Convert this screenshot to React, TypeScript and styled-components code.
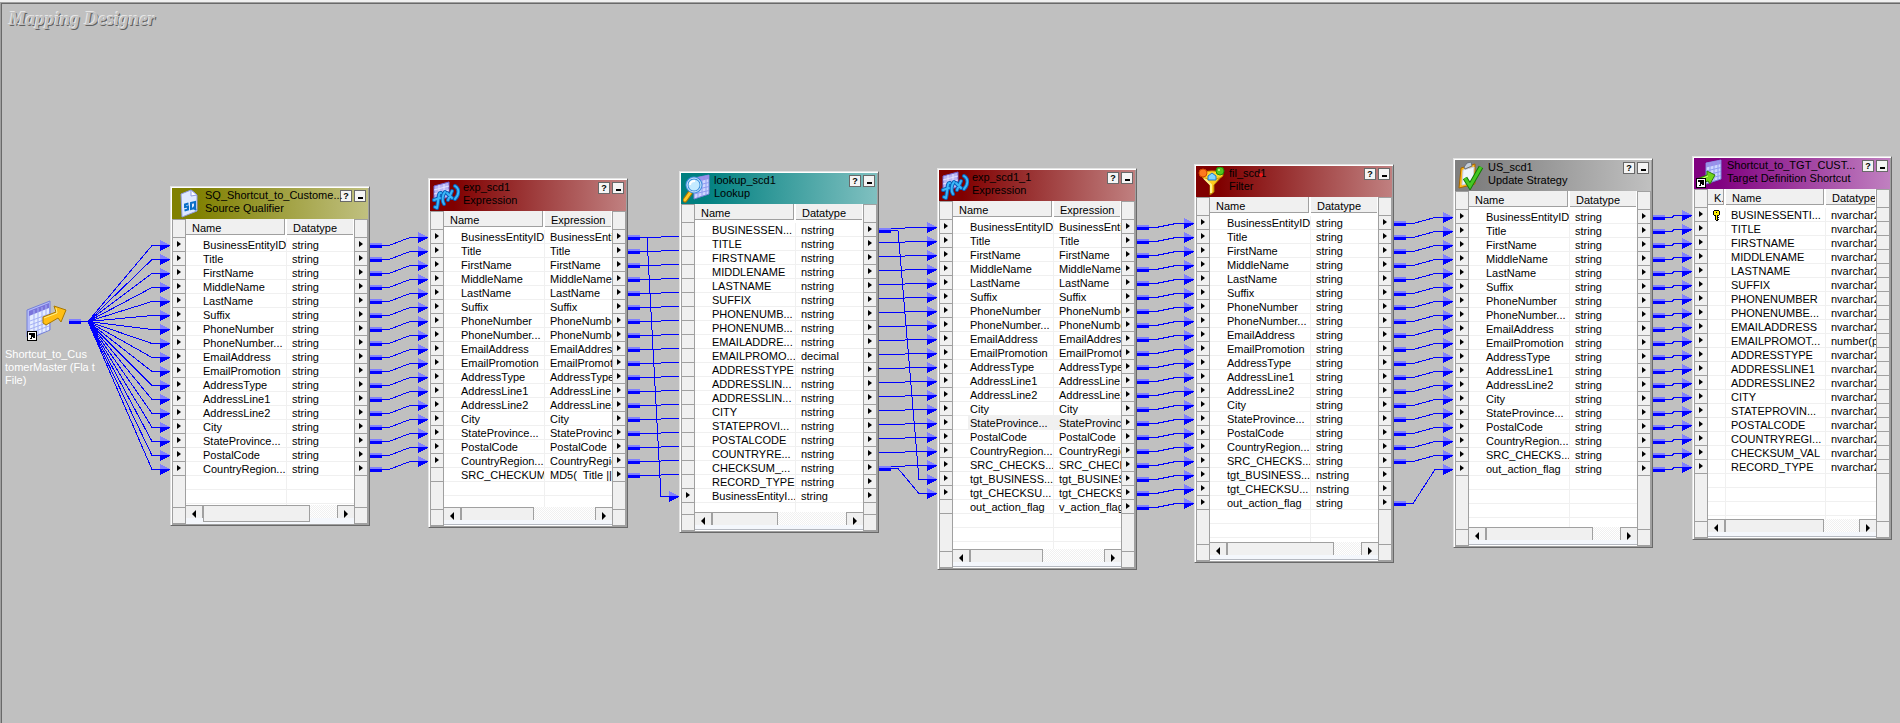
import React from "react";
import styled, { createGlobalStyle, css } from "styled-components";

const GlobalStyle = createGlobalStyle`
  * { box-sizing: border-box; }
  body {
    margin: 0;
    background: #c0c0c0;
    font-family: "Liberation Sans", Arial, sans-serif;
    font-size: 11px;
    line-height: 13px;
    color: #000;
  }
`;

/* ---------- geometry shared by the nodes and the links ---------- */

const ROW = 14;
const NODE_WIDTH = 200;
const FIRST_PORT = 59;

type Theme = { from: string; to: string };

const THEMES: Record<string, Theme> = {
  olive: { from: "#808000", to: "#c0c080" },
  red: { from: "#800000", to: "#c08080" },
  teal: { from: "#008080", to: "#80c0c0" },
  gray: { from: "#808080", to: "#c0c0c0" },
  purple: { from: "#800080", to: "#c080c0" },
};

type Row = {
  name: string;
  value: string;
  input?: boolean;
  output?: boolean;
  active?: boolean;
  primaryKey?: boolean;
};

type NodeData = {
  id: string;
  title: string;
  kind: string;
  theme: Theme;
  icon: React.ReactNode;
  x: number;
  y: number;
  height: number;
  valueLabel: string;
  thumb: number;
  tallThumb?: boolean;
  keyColumn?: boolean;
  flagged?: boolean;
  rows: Row[];
};

/* ---------- styled parts ---------- */

const Canvas = styled.main`
  position: relative;
  min-height: 100vh;
  overflow: hidden;
  background: #c0c0c0;
  box-shadow: inset 0 2px #f0f0f0, inset 1px 3px #a0a0a0, inset 2px 4px #696969;
`;

const CanvasTitle = styled.h1`
  margin: 0;
  padding: 8px 9px;
  font: italic bold 19px/22px "Liberation Serif", "Times New Roman", serif;
  color: #c0c0c0;
  text-shadow: -1px -1px 0 #e6e6e6, 1px 1px 0 #606060;
`;

const Links = styled.svg`
  position: absolute;
  inset: 0;
  width: 100%;
  height: 100%;
  pointer-events: none;
`;

const SourceNode = styled.figure`
  position: absolute;
  left: 5px;
  top: 299px;
  margin: 0;
  width: 88px;
  color: #fff;
`;

const SourceIcon = styled.svg`
  display: block;
  width: 42px;
  height: 42px;
  margin: 0 0 7px 20px;
`;

const SourceLabel = styled.figcaption`
  white-space: pre;
`;

const Window = styled.section<{ $x: number; $y: number; $height: number }>`
  position: absolute;
  left: ${(p) => p.$x}px;
  top: ${(p) => p.$y}px;
  width: ${NODE_WIDTH}px;
  height: ${(p) => p.$height}px;
  display: flex;
  flex-direction: column;
  background: #fff;
  border: 1px solid;
  border-color: #e3e3e3 #696969 #696969 #e3e3e3;
  box-shadow: inset 1px 1px #fff, inset -1px -1px #a0a0a0;
  padding: 1px;
`;

const TitleBar = styled.header<{ $theme: Theme }>`
  flex: none;
  display: flex;
  align-items: flex-start;
  height: 31px;
  padding: 0 2px;
  background: linear-gradient(to right, ${(p) => p.$theme.from} 12%, ${(p) => p.$theme.to});
`;

const TitleIcon = styled.svg`
  flex: none;
  width: 28px;
  height: 29px;
  margin-top: 1px;
`;

const TitleText = styled.div`
  position: relative;
  flex: 1;
  min-width: 0;
  padding: 1px 0 0 3px;
  white-space: nowrap;
`;

const TitleLine = styled.h2`
  margin: 0;
  font: inherit;
`;

const Flag = styled.span`
  position: absolute;
  left: 33px;
  top: 7px;
  width: 4px;
  height: 4px;
  border-radius: 2px;
  background: #f01818;
`;

const TitleButtons = styled.div`
  flex: none;
  display: flex;
  gap: 2px;
  padding-top: 2px;
`;

const TitleButton = styled.button`
  display: grid;
  place-items: center;
  width: 12px;
  height: 12px;
  padding: 0;
  border: 1px solid #696969;
  background: #f4f4f4;
  font: bold 9px/10px "Liberation Sans", Arial, sans-serif;
  color: #000;
`;

const MinimizeMark = styled.span`
  width: 5px;
  height: 2px;
  margin-top: 4px;
  background: #000;
`;

const Body = styled.div`
  flex: 1;
  min-height: 0;
  display: flex;
`;

const Gutter = styled.div`
  flex: none;
  display: flex;
  flex-direction: column;
  width: 14px;
  background: #f0f0f0;
  border: 1px solid #a0a0a0;
  border-width: 1px 1px 0;
`;

const GutterHead = styled.div`
  flex: none;
  height: 18px;
  border-bottom: 1px solid #a0a0a0;
`;

const PortCell = styled.div`
  flex: none;
  display: flex;
  align-items: center;
  justify-content: center;
  height: ${ROW}px;
  padding-bottom: 1px;
  border-bottom: 1px solid #a0a0a0;
`;

const PortMark = styled.span`
  border: solid transparent;
  border-width: 3px 0 3px 4px;
  border-left-color: #000;
`;

const GutterRest = styled.div`
  flex: 1;
`;

const GutterFoot = styled.div`
  flex: none;
  height: 17px;
  border: solid #a0a0a0;
  border-width: 1px 0;
`;

const Middle = styled.div`
  flex: 1;
  min-width: 0;
  display: flex;
  flex-direction: column;
`;

const Grid = styled.div`
  flex: 1;
  min-height: 0;
  overflow: hidden;
`;

const Table = styled.table`
  width: 100%;
  table-layout: fixed;
  border-collapse: separate;
  border-spacing: 0;
`;

const KeyCol = styled.col`
  width: 18px;
`;

const NameCol = styled.col<{ $wide: boolean }>`
  width: ${(p) => (p.$wide ? 101 : 100)}px;
`;

const HeadCell = styled.th`
  height: 19px;
  padding: 0 1px 3px 0;
  font-weight: normal;
  text-align: left;
  vertical-align: top;
`;

const HeadLabel = styled.div<{ $last?: boolean }>`
  height: 16px;
  padding: 3px 0 0 6px;
  line-height: 12px;
  overflow: hidden;
  white-space: nowrap;
  background: #f0f0f0;
  border-bottom: 1px solid #a0a0a0;
  ${(p) =>
    !p.$last &&
    css`
      margin-right: 1px;
      border-right: 1px solid #a0a0a0;
    `}
`;

const Cell = styled.td<{ $indent: number; $last?: boolean; $active?: boolean }>`
  height: ${ROW}px;
  padding: 2px 0 0 ${(p) => p.$indent}px;
  line-height: 11px;
  white-space: pre;
  overflow: hidden;
  border-bottom: 1px solid #f0f0f0;
  ${(p) => !p.$last && "border-right: 1px solid #f0f0f0;"}
  ${(p) =>
    p.$active &&
    (p.$last
      ? "background: #f0f0f0;"
      : "background: linear-gradient(to right, #fff 15px, #f0f0f0 15px);")}
`;

const KeyIcon = styled.svg`
  display: block;
  width: 7px;
  height: 11px;
`;

const ScrollArea = styled.div<{ $line: boolean }>`
  flex: none;
  height: 19px;
  background: #f4f7fc;
  ${(p) => p.$line && "box-shadow: inset 0 -1px #fff, inset 0 -2px #b4b8c0;"}
`;

const ScrollBar = styled.div`
  display: flex;
  height: 13px;
  background: repeating-conic-gradient(#f0f0f0 0 25%, #fff 0 50%) 0 0 / 2px 2px;
`;

const ScrollButton = styled.button<{ $side: "left" | "right" }>`
  display: grid;
  place-items: center;
  width: 17px;
  height: 13px;
  padding: 3px 0 0;
  border: 0 solid #a0a0a0;
  border-top-width: 1px;
  background: #f0f0f0;
  ${(p) =>
    p.$side === "left"
      ? "border-right-width: 1px;"
      : "border-left-width: 1px; margin-left: auto;"}
`;

const ScrollMark = styled.span<{ $side: "left" | "right" }>`
  border: solid transparent;
  border-width: ${(p) => (p.$side === "left" ? "4px 4px 4px 0" : "4px 0 4px 4px")};
  border-${(p) => (p.$side === "left" ? "right" : "left")}-color: #000;
`;

const Thumb = styled.div<{ $width: number; $tall?: boolean }>`
  width: ${(p) => p.$width}px;
  height: ${(p) => (p.$tall ? 17 : 13)}px;
  background: #f0f0f0;
  border: 1px solid #a0a0a0;
  ${(p) => !p.$tall && "border-bottom: 0;"}
`;

/* ---------- icons ---------- */

const SheetShape = () => (
  <g>
    <path d="M9 3 L24 0 V19 L9 24 Z" fill="#cdd6ff" stroke="#7880d8" strokeWidth="1" />
    <path d="M9 3 L24 0 V4 L9 7.500 Z" fill="#9a8ee8" />
    <path
      d="M13 3 V22 M17 2 V21 M21 1 V20 M9 11 L24 7.500 M9 15 L24 11.500 M9 19 L24 15.500"
      stroke="#8f9cf0"
      strokeWidth="1"
      fill="none"
    />
  </g>
);

const ShortcutBadge = ({ x, y }: { x: number; y: number }) => (
  <g transform={`translate(${x} ${y})`} shapeRendering="crispEdges">
    <rect x="0.5" y="0.5" width="9" height="9" fill="#fff" stroke="#000" />
    <path d="M2 2 H8 V7 H6 V6 H5 V8 H3 V7 H4 V4 H2 Z" fill="#000" />
  </g>
);

const SqIcon = (
  <TitleIcon viewBox="0 0 28 29" aria-hidden="true">
    <path d="M7 5 L17 1 L23 6 V22 L8 28 Z" fill="#dfe9ff" stroke="#8f9be0" />
    <path d="M17 1 V7 L23 6 Z" fill="#fff" stroke="#8f9be0" />
    <g fill="none" stroke="#0a6fc8" strokeWidth="2">
      <path d="M14.500 14.500 L11 15.500 V18 L14 17.500 V20.500 L10.500 21.500" />
      <path d="M17 14 L21 13 V19 L17 20 Z M19 18 L22 21" />
    </g>
  </TitleIcon>
);

const FxIcon = (
  <TitleIcon viewBox="0 0 28 29" aria-hidden="true">
    <path d="M2 5 L17 1 V16 L2 20 Z" fill="#b7b4f4" stroke="#6f62d0" />
    <path d="M2 9 L17 5 M2 13 L17 9 M7 4 V19 M12 3 V17" stroke="#e4e4ff" fill="none" />
    <g fill="none" strokeLinecap="round" strokeLinejoin="round">
      <g stroke="#0a5fb8" strokeWidth="4">
        <path d="M9 12 C6 11 7 18 5 27 L3 26 M2 19 L8 17" />
        <path d="M13 11 C10 14 10 20 12 23 M23 5 C28 8 27 14 23 18 M15 12 L20 17 M20 10 L16 19" />
      </g>
      <g stroke="#3cb8f8" strokeWidth="2">
        <path d="M9 12 C6 11 7 18 5 27 L3 26 M2 19 L8 17" />
        <path d="M13 11 C10 14 10 20 12 23 M23 5 C28 8 27 14 23 18 M15 12 L20 17 M20 10 L16 19" />
      </g>
    </g>
  </TitleIcon>
);

const LookupIcon = (
  <TitleIcon viewBox="0 0 28 29" aria-hidden="true">
    <g transform="translate(2 1)">
      <SheetShape />
    </g>
    <path d="M7 19 L2 26" stroke="#a87400" strokeWidth="5" strokeLinecap="round" />
    <path d="M7 19 L2 26" stroke="#ffc928" strokeWidth="3" strokeLinecap="round" />
    <circle cx="11" cy="11" r="7" fill="#c4eaff" stroke="#3e8fdc" strokeWidth="3" />
    <circle cx="11" cy="11" r="7" fill="none" stroke="#d8ecff" strokeWidth="1" />
    <path d="M7 11 C7 8 9 7 12 7" stroke="#fff" strokeWidth="2" fill="none" />
  </TitleIcon>
);

const FilterIcon = (
  <TitleIcon viewBox="0 0 28 29" aria-hidden="true">
    <path d="M2 8 H25 L16 18 V25 L12 28 V18 Z" fill="#ffcb1e" stroke="#a86c00" />
    <path d="M6 11 L13 18 V26" stroke="#fff08a" strokeWidth="2" fill="none" />
    <ellipse cx="14" cy="8" rx="11" ry="4" fill="#ffd428" stroke="#d89600" />
    <path d="M10 9 L14 6 L18 9 V13 H10 Z" fill="#7fd4ff" stroke="#1f78c8" />
    <circle cx="5" cy="6" r="4" fill="#ff7a1e" stroke="#d04800" />
    <circle cx="22" cy="4" r="4" fill="#52c41e" stroke="#1e8a08" />
    <circle cx="21" cy="3" r="1" fill="#c6ff9a" />
  </TitleIcon>
);

const StrategyIcon = (
  <TitleIcon viewBox="0 0 28 29" aria-hidden="true">
    <path d="M4 7 L18 3 V23 L2 27 Z" fill="#ffb81e" stroke="#a86800" />
    <path d="M6 9 L17 6 L16 21 L5 24 Z" fill="#f0f6ff" stroke="#c8d0e0" />
    <path d="M7 6 L10 2 L14 1 L15 5 L8 8 Z" fill="#c4ccd8" stroke="#68707c" />
    <path d="M8 17 L13 25 L24 6" fill="none" stroke="#147a08" strokeWidth="5" />
    <path d="M8 17 L13 25 L24 6" fill="none" stroke="#45c824" strokeWidth="3" />
  </TitleIcon>
);

const TargetIcon = (
  <TitleIcon viewBox="0 0 28 29" aria-hidden="true">
    <g transform="translate(1 1)">
      <SheetShape />
    </g>
    <path d="M1 20 L11 16 V12 L19 16 L14 25 L12 22 L3 25 Z" fill="#6fd41a" stroke="#2c7a08" />
    <path d="M3 21 L12 17" stroke="#d4ff7a" fill="none" />
    <ShortcutBadge x={0} y={19} />
  </TitleIcon>
);

/* ---------- data ---------- */

const FIELDS = [
  "BusinessEntityID",
  "Title",
  "FirstName",
  "MiddleName",
  "LastName",
  "Suffix",
  "PhoneNumber",
  "PhoneNumber...",
  "EmailAddress",
  "EmailPromotion",
  "AddressType",
  "AddressLine1",
  "AddressLine2",
  "City",
  "StateProvince...",
  "PostalCode",
  "CountryRegion...",
];

const EXPRESSIONS = [
  "BusinessEntit",
  "Title",
  "FirstName",
  "MiddleName",
  "LastName",
  "Suffix",
  "PhoneNumbe",
  "PhoneNumbe",
  "EmailAddress",
  "EmailPromotio",
  "AddressType",
  "AddressLine1",
  "AddressLine2",
  "City",
  "StateProvince",
  "PostalCode",
  "CountryRegio",
];

const through = (name: string, value: string): Row => ({ name, value, input: true, output: true });
const stringRows = (names: string[]) => names.map((n) => through(n, "string"));
const lookupRow = (name: string): Row => ({
  name,
  value: name.startsWith("EMAILPROMO") ? "decimal" : "nstring",
  output: true,
});
const targetRow = (name: string, i: number): Row => ({
  name,
  value: name.startsWith("EMAILPROMO") ? "number(p" : "nvarchar2",
  input: true,
  primaryKey: i === 0,
});
const passRows = FIELDS.map((n, i) => through(n, EXPRESSIONS[i]));

const NODES: NodeData[] = [
  {
    id: "sq",
    title: "SQ_Shortcut_to_Custome...",
    kind: "Source Qualifier",
    theme: THEMES.olive,
    icon: SqIcon,
    x: 170,
    y: 186,
    height: 340,
    valueLabel: "Datatype",
    thumb: 107,
    tallThumb: true,
    rows: stringRows(FIELDS),
  },
  {
    id: "exp",
    title: "exp_scd1",
    kind: "Expression",
    theme: THEMES.red,
    icon: FxIcon,
    x: 428,
    y: 178,
    height: 350,
    valueLabel: "Expression",
    thumb: 73,
    rows: [...passRows, { name: "SRC_CHECKUM", value: "MD5(  Title ||", output: true }],
  },
  {
    id: "lookup",
    title: "lookup_scd1",
    kind: "Lookup",
    theme: THEMES.teal,
    icon: LookupIcon,
    x: 679,
    y: 171,
    height: 362,
    valueLabel: "Datatype",
    thumb: 66,
    rows: [
      ...[
        "BUSINESSEN...",
        "TITLE",
        "FIRSTNAME",
        "MIDDLENAME",
        "LASTNAME",
        "SUFFIX",
        "PHONENUMB...",
        "PHONENUMB...",
        "EMAILADDRE...",
        "EMAILPROMO...",
        "ADDRESSTYPE",
        "ADDRESSLIN...",
        "ADDRESSLIN...",
        "CITY",
        "STATEPROVI...",
        "POSTALCODE",
        "COUNTRYRE...",
        "CHECKSUM_...",
        "RECORD_TYPE",
      ].map(lookupRow),
      through("BusinessEntityI...", "string"),
    ],
  },
  {
    id: "exp1",
    title: "exp_scd1_1",
    kind: "Expression",
    theme: THEMES.red,
    icon: FxIcon,
    x: 937,
    y: 168,
    height: 402,
    valueLabel: "Expression",
    thumb: 73,
    rows: [
      ...passRows.map((r, i) => ({ ...r, active: i === 14 })),
      through("SRC_CHECKS...", "SRC_CHECK"),
      through("tgt_BUSINESS...", "tgt_BUSINES"),
      through("tgt_CHECKSU...", "tgt_CHECKS"),
      { name: "out_action_flag", value: "v_action_flag", output: true },
    ],
  },
  {
    id: "fil",
    title: "fil_scd1",
    kind: "Filter",
    theme: THEMES.red,
    icon: FilterIcon,
    x: 1194,
    y: 164,
    height: 399,
    valueLabel: "Datatype",
    thumb: 107,
    flagged: true,
    rows: [
      ...stringRows([...FIELDS, "SRC_CHECKS..."]),
      through("tgt_BUSINESS...", "nstring"),
      through("tgt_CHECKSU...", "nstring"),
      through("out_action_flag", "string"),
    ],
  },
  {
    id: "us",
    title: "US_scd1",
    kind: "Update Strategy",
    theme: THEMES.gray,
    icon: StrategyIcon,
    x: 1453,
    y: 158,
    height: 390,
    valueLabel: "Datatype",
    thumb: 107,
    rows: stringRows([...FIELDS, "SRC_CHECKS...", "out_action_flag"]),
  },
  {
    id: "tgt",
    title: "Shortcut_to_TGT_CUST...",
    kind: "Target Definition Shortcut",
    theme: THEMES.purple,
    icon: TargetIcon,
    x: 1692,
    y: 156,
    height: 384,
    valueLabel: "Datatype",
    thumb: 99,
    keyColumn: true,
    rows: [
      "BUSINESSENTI...",
      "TITLE",
      "FIRSTNAME",
      "MIDDLENAME",
      "LASTNAME",
      "SUFFIX",
      "PHONENUMBER",
      "PHONENUMBE...",
      "EMAILADDRESS",
      "EMAILPROMOT...",
      "ADDRESSTYPE",
      "ADDRESSLINE1",
      "ADDRESSLINE2",
      "CITY",
      "STATEPROVIN...",
      "POSTALCODE",
      "COUNTRYREGI...",
      "CHECKSUM_VAL",
      "RECORD_TYPE",
    ].map(targetRow),
  },
];

type Link = { from: string; fromRow: number; to: string; toRow: number };

const parallel = (from: string, to: string, count: number): Link[] =>
  Array.from({ length: count }, (_, i) => ({ from, fromRow: i, to, toRow: i }));

const LINKS: Link[] = [
  ...Array.from({ length: 17 }, (_, i) => ({ from: "source", fromRow: 0, to: "sq", toRow: i })),
  ...parallel("sq", "exp", 17),
  ...parallel("exp", "exp1", 18),
  { from: "exp", fromRow: 0, to: "lookup", toRow: 19 },
  { from: "lookup", fromRow: 0, to: "exp1", toRow: 18 },
  { from: "lookup", fromRow: 17, to: "exp1", toRow: 19 },
  ...parallel("exp1", "fil", 21),
  ...parallel("fil", "us", 18),
  { from: "fil", fromRow: 20, to: "us", toRow: 18 },
  ...parallel("us", "tgt", 19),
];

const byId = (id: string) => NODES.find((n) => n.id === id) as NodeData;

const outPoint = (id: string, row: number) => {
  if (id === "source") return { x: 69, y: 321 };
  const node = byId(id);
  return { x: node.x + NODE_WIDTH, y: node.y + FIRST_PORT + row * ROW };
};

const inPoint = (id: string, row: number) => {
  const node = byId(id);
  return { x: node.x, y: node.y + FIRST_PORT + row * ROW };
};

const LinkShape = ({ link }: { link: Link }) => {
  const a = outPoint(link.from, link.fromRow);
  const b = inPoint(link.to, link.toRow);
  return (
    <g>
      <polyline
        points={`${a.x},${a.y + 0.5} ${a.x + 19},${a.y + 0.5} ${b.x - 18},${b.y + 0.5} ${b.x - 9},${b.y + 0.5}`}
        fill="none"
        stroke="#0000ff"
      />
      <rect x={a.x} y={a.y - 2} width="12" height="2" fill="#8080ff" />
      <rect x={a.x} y={a.y} width="12" height="3" fill="#0000ff" />
      <path d={`M${b.x - 10} ${b.y - 5} L${b.x} ${b.y} H${b.x - 10} Z`} fill="#8080ff" />
      <path d={`M${b.x - 10} ${b.y} H${b.x} V${b.y + 1} L${b.x - 10} ${b.y + 6} Z`} fill="#0000ff" />
    </g>
  );
};

/* ---------- components ---------- */

const PortGutter = ({ node, side }: { node: NodeData; side: "input" | "output" }) => (
  <Gutter>
    <GutterHead />
    {node.rows.map((row, i) => (
      <PortCell key={i}>{row[side] && <PortMark />}</PortCell>
    ))}
    <GutterRest />
    <GutterFoot />
  </Gutter>
);

const BLANK_ROWS = [0, 1, 2, 3];

const PortTable = ({ node }: { node: NodeData }) => {
  const indent = node.keyColumn ? 5 : 17;
  return (
    <Table aria-label={node.title}>
      <colgroup>
        {node.keyColumn && <KeyCol />}
        <NameCol $wide={!node.keyColumn} />
        <col />
      </colgroup>
      <thead>
        <tr>
          {node.keyColumn && (
            <HeadCell>
              <HeadLabel>K.</HeadLabel>
            </HeadCell>
          )}
          <HeadCell>
            <HeadLabel>Name</HeadLabel>
          </HeadCell>
          <HeadCell>
            <HeadLabel $last>{node.valueLabel}</HeadLabel>
          </HeadCell>
        </tr>
      </thead>
      <tbody>
        {node.rows.map((row, i) => (
          <tr key={i}>
            {node.keyColumn && (
              <Cell $indent={5}>
                {row.primaryKey && (
                  <KeyIcon
                    viewBox="0 0 7 11"
                    role="img"
                    aria-label="Primary key"
                    shapeRendering="crispEdges"
                  >
                    <path
                      d="M1 0 H6 V1 H7 V5 H6 V6 H5 V7 H6 V8 H5 V9 H6 V10 H5 V11 H3 V10 H2 V6 H1 V5 H0 V1 H1 Z"
                      fill="#000"
                    />
                    <path d="M1 1 H6 V5 H4 V10 H3 V5 H1 Z" fill="#ffee00" />
                    <rect x="3" y="2" width="1" height="1" fill="#000" />
                  </KeyIcon>
                )}
              </Cell>
            )}
            <Cell $indent={indent} $active={row.active}>
              {row.name}
            </Cell>
            <Cell $indent={5} $last $active={row.active}>
              {row.value}
            </Cell>
          </tr>
        ))}
        {BLANK_ROWS.map((i) => (
          <tr key={`blank-${i}`} aria-hidden="true">
            {node.keyColumn && <Cell $indent={0} />}
            <Cell $indent={0} />
            <Cell $indent={0} $last />
          </tr>
        ))}
      </tbody>
    </Table>
  );
};

const NodeWindow = ({ node }: { node: NodeData }) => (
  <Window $x={node.x} $y={node.y} $height={node.height}>
    <TitleBar $theme={node.theme}>
      {node.icon}
      <TitleText>
        <TitleLine>{node.title}</TitleLine>
        {node.kind}
        {node.flagged && <Flag />}
      </TitleText>
      <TitleButtons>
        <TitleButton type="button" aria-label="Help">
          ?
        </TitleButton>
        <TitleButton type="button" aria-label="Minimize">
          <MinimizeMark />
        </TitleButton>
      </TitleButtons>
    </TitleBar>
    <Body>
      <PortGutter node={node} side="input" />
      <Middle>
        <Grid>
          <PortTable node={node} />
        </Grid>
        <ScrollArea $line={!node.tallThumb}>
          <ScrollBar>
            <ScrollButton type="button" aria-label="Scroll left" $side="left">
              <ScrollMark $side="left" />
            </ScrollButton>
            <Thumb $width={node.thumb} $tall={node.tallThumb} />
            <ScrollButton type="button" aria-label="Scroll right" $side="right">
              <ScrollMark $side="right" />
            </ScrollButton>
          </ScrollBar>
        </ScrollArea>
      </Middle>
      <PortGutter node={node} side="output" />
    </Body>
  </Window>
);

export default function App() {
  return (
    <>
      <GlobalStyle />
      <Canvas>
        <CanvasTitle>Mapping Designer</CanvasTitle>
        <Links aria-hidden="true" shapeRendering="crispEdges">
          {LINKS.map((link, i) => (
            <LinkShape key={i} link={link} />
          ))}
        </Links>
        <SourceNode>
          <SourceIcon viewBox="0 0 42 42" aria-hidden="true">
            <path d="M2 11 L25 2 V31 L4 40 L2 38 Z" fill="#b4bcf8" stroke="#7480d8" />
            <path d="M5 14 L24 7 V31 L5 38 Z" fill="#e4ecff" />
            <path d="M4 12 L24 4 V9 L4 17 Z" fill="#7a74dc" />
            <path
              d="M9 11 V37 M13 9 V35 M17 8 V34 M21 6 V32 M5 22 L24 15 M5 26 L24 19 M5 30 L24 23 M5 34 L24 27"
              stroke="#a4b0f4"
              fill="none"
            />
            <path
              d="M18 18 L31 13 L29 7 L41 11 L36 23 L33 19 L21 26 L18 24 Z"
              fill="#ffbe14"
              stroke="#a87800"
            />
            <path d="M19 19 L32 14 L31 9" stroke="#fff08a" fill="none" />
            <ShortcutBadge x={2} y={32} />
          </SourceIcon>
          <SourceLabel>{"Shortcut_to_Cus\ntomerMaster (Fla t\nFile)"}</SourceLabel>
        </SourceNode>
        {NODES.map((node) => (
          <NodeWindow key={node.id} node={node} />
        ))}
      </Canvas>
    </>
  );
}
